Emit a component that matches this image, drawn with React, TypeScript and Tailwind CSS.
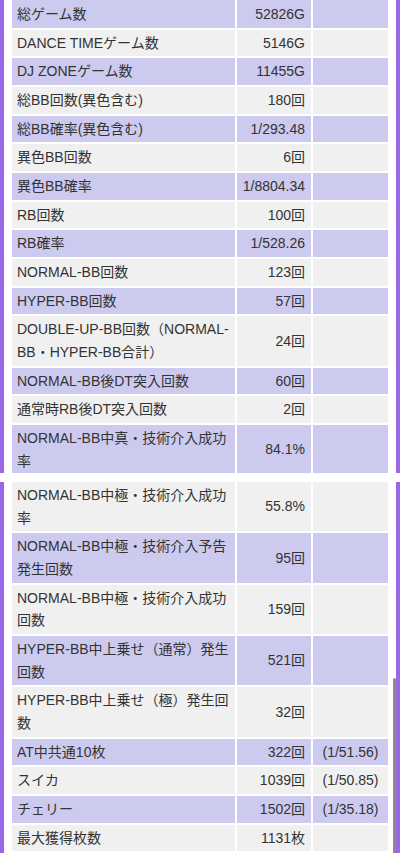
type Row = { label: string; value: string; rate?: string };

const topRows: Row[] = [
  { label: "総ゲーム数", value: "52826G" },
  { label: "DANCE TIMEゲーム数", value: "5146G" },
  { label: "DJ ZONEゲーム数", value: "11455G" },
  { label: "総BB回数(異色含む)", value: "180回" },
  { label: "総BB確率(異色含む)", value: "1/293.48" },
  { label: "異色BB回数", value: "6回" },
  { label: "異色BB確率", value: "1/8804.34" },
  { label: "RB回数", value: "100回" },
  { label: "RB確率", value: "1/528.26" },
  { label: "NORMAL-BB回数", value: "123回" },
  { label: "HYPER-BB回数", value: "57回" },
  { label: "DOUBLE-UP-BB回数（NORMAL-BB・HYPER-BB合計）", value: "24回" },
  { label: "NORMAL-BB後DT突入回数", value: "60回" },
  { label: "通常時RB後DT突入回数", value: "2回" },
  { label: "NORMAL-BB中真・技術介入成功率", value: "84.1%" },
];

const bottomRows: Row[] = [
  { label: "NORMAL-BB中極・技術介入成功率", value: "55.8%" },
  { label: "NORMAL-BB中極・技術介入予告発生回数", value: "95回" },
  { label: "NORMAL-BB中極・技術介入成功回数", value: "159回" },
  { label: "HYPER-BB中上乗せ（通常）発生回数", value: "521回" },
  { label: "HYPER-BB中上乗せ（極）発生回数", value: "32回" },
  { label: "AT中共通10枚", value: "322回", rate: "(1/51.56)" },
  { label: "スイカ", value: "1039回", rate: "(1/50.85)" },
  { label: "チェリー", value: "1502回", rate: "(1/35.18)" },
  { label: "最大獲得枚数", value: "1131枚" },
];

function DataRow({ row, purple, first }: { row: Row; purple: boolean; first?: boolean }) {
  const bg = purple ? "bg-[#cdcaf0]" : "bg-[#f0f0f0]";
  return (
    <div className="grid grid-cols-[223px_74px_75px] gap-[2px]">
      <div className={`${bg} pl-[5px] pr-[4px] ${first ? "pt-[3px]" : "pt-[2px]"} pb-[2px]`}>
        {row.label}
      </div>
      <div className={`${bg} flex items-center justify-end pr-[6px]`}>{row.value}</div>
      <div className={`${bg} flex items-center justify-center`}>{row.rate ?? ""}</div>
    </div>
  );
}

function Section({ rows, startPurple, className }: { rows: Row[]; startPurple: boolean; className: string }) {
  return (
    <div className={`flex overflow-hidden ${className}`}>
      <div className="w-[4px] shrink-0 bg-[#9966e6]" />
      <div className="flex-1 px-[8px]">
        <div className="flex flex-col gap-[2px]">
          {rows.map((r, i) => (
            <DataRow
              key={r.label}
              row={r}
              purple={startPurple ? i % 2 === 0 : i % 2 === 1}
              first={startPurple && i === 0}
            />
          ))}
        </div>
      </div>
      <div className="w-[4px] shrink-0 bg-[#9966e6]" />
    </div>
  );
}

export default function App() {
  return (
    <div
      className="relative w-[400px] h-[853px] overflow-hidden bg-white text-[14px] leading-[22.67px] text-[#333]"
      style={{ fontFamily: '"Liberation Sans", "Noto Sans CJK JP", sans-serif' }}
    >
      <Section rows={topRows} startPurple className="h-[473px]" />
      <div className="h-[9px]" />
      <Section rows={bottomRows} startPurple={false} className="h-[371px]" />
      <div className="absolute left-[393px] top-[678px] w-[3px] h-[180px] rounded-t-full bg-[#8a8a8a]" />
    </div>
  );
}
